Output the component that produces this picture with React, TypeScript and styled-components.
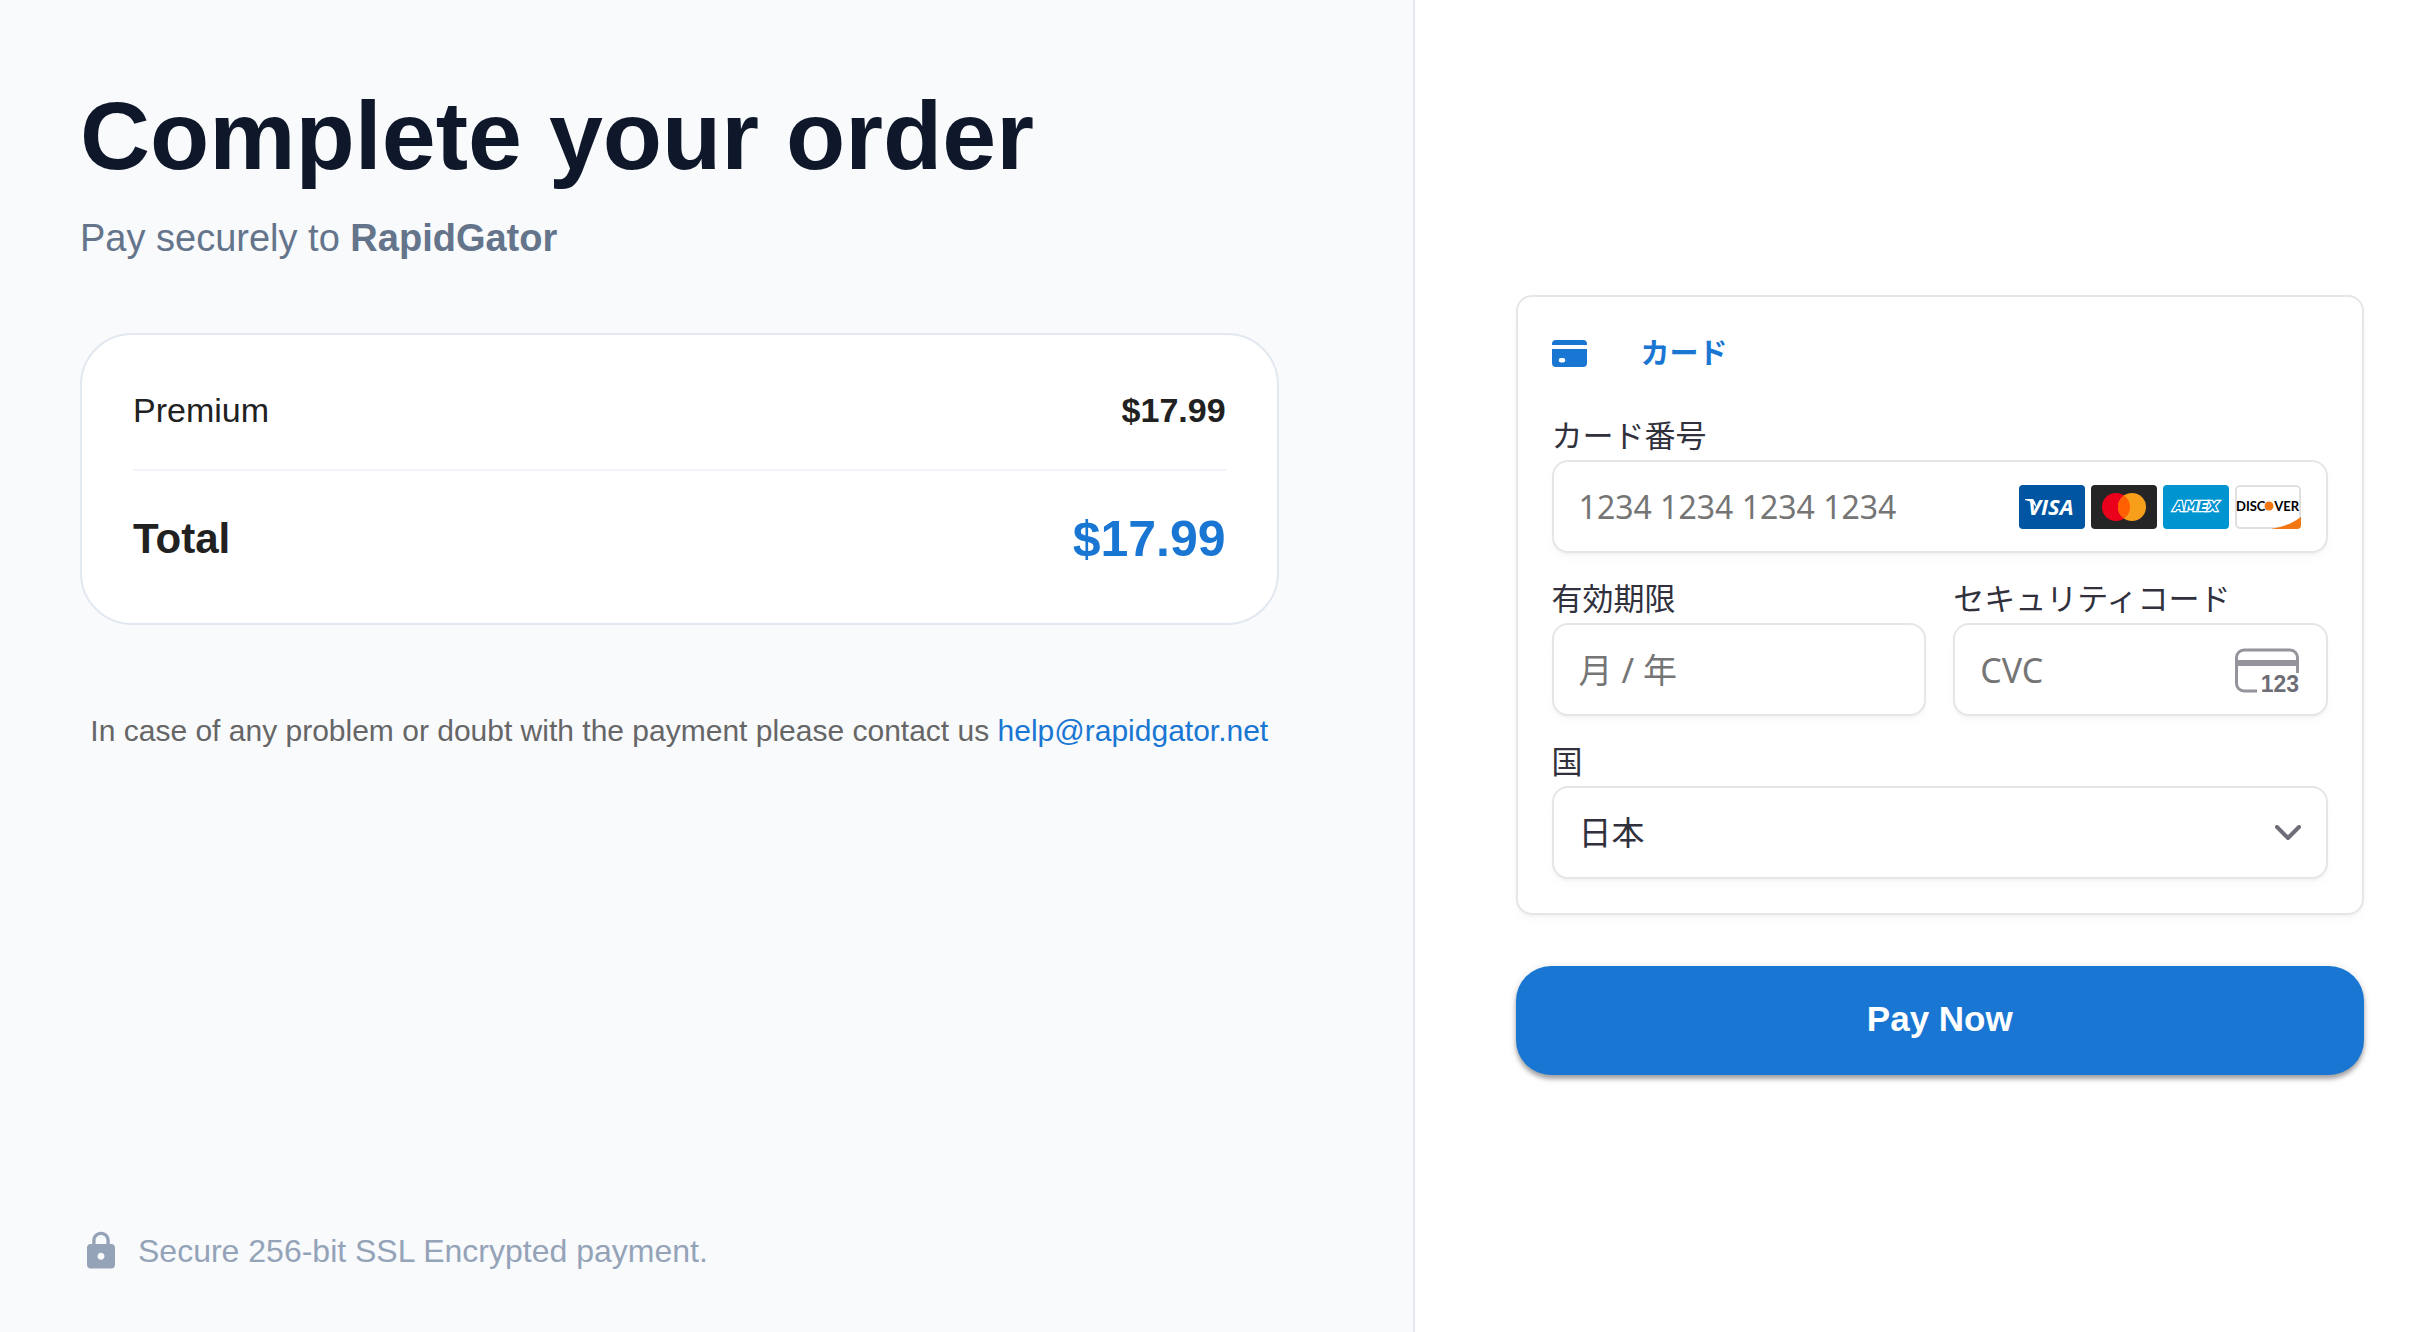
import React from "react";
import styled, { createGlobalStyle } from "styled-components";

const latin = `"Liberation Sans", Arial, Helvetica, sans-serif`;
const formFont = `"Noto Sans", "Noto Sans CJK JP", sans-serif`;
const blue = "#1976d2";

const GlobalStyle = createGlobalStyle`
  *, *::before, *::after { box-sizing: border-box; }
  body { margin: 0; background: #fff; font-family: ${latin}; }
`;

const Page = styled.div`
  display: grid;
  grid-template-columns: minmax(0, 7fr) minmax(0, 5fr);
  min-height: 100vh;
`;

const Summary = styled.section`
  display: flex;
  flex-direction: column;
  padding: 80px 134px 58px 80px;
  background: #f8fafc;
  border-right: 2px solid #e2e8f0;
`;

const Title = styled.h1`
  margin: 0 0 18px;
  font-size: 97px;
  line-height: 112px;
  font-weight: 700;
  color: #0f172a;
`;

const Subtitle = styled.p`
  margin: 0 0 67px;
  font-size: 38px;
  line-height: 56px;
  color: #64748b;
`;

const OrderCard = styled.div`
  padding: 51px;
  background: #fff;
  border: 2px solid #e2e8f0;
  border-radius: 52px;
  color: #212121;
`;

const OrderRow = styled.div<{ $total?: boolean }>`
  display: flex;
  align-items: center;
  justify-content: space-between;
  font-size: ${(p) => (p.$total ? 42 : 34)}px;
  line-height: ${(p) => (p.$total ? 66 : 48)}px;
  font-weight: ${(p) => (p.$total ? 700 : 400)};
`;

const Price = styled.span<{ $total?: boolean }>`
  font-weight: 700;
  font-size: ${(p) => (p.$total ? 50 : 34)}px;
  color: ${(p) => (p.$total ? blue : "inherit")};
`;

const Divider = styled.hr`
  height: 2px;
  margin: 35px 0;
  border: 0;
  background: #f1f5f9;
`;

const Help = styled.p`
  margin: 83px 0 0;
  text-align: center;
  font-size: 30px;
  line-height: 46px;
  color: #666;
`;

const HelpLink = styled.a`
  color: ${blue};
  text-decoration: none;
`;

const Secure = styled.footer`
  display: flex;
  align-items: center;
  gap: 16px;
  margin-top: auto;
  font-size: 32px;
  line-height: 46px;
  color: #94a3b8;
`;

const Payment = styled.form`
  display: flex;
  flex-direction: column;
  justify-content: center;
  gap: 51px;
  padding: 38px 61px 0 101px;
  font-family: ${formFont};
`;

const Panel = styled.div`
  display: flex;
  flex-direction: column;
  gap: 24px;
  padding: 34px;
  border: 2px solid #e6e6e6;
  border-radius: 16px;
  box-shadow: 0 2px 2px rgba(0, 0, 0, 0.03), 0 6px 12px rgba(0, 0, 0, 0.02);
`;

const Method = styled.h2`
  display: flex;
  align-items: center;
  gap: 54px;
  margin: 0 0 15px;
  font-size: 29px;
  line-height: 44px;
  font-weight: 700;
  color: ${blue};
`;

const Columns = styled.div`
  display: grid;
  grid-template-columns: minmax(0, 1fr) minmax(0, 1fr);
  gap: 27px;
`;

const Field = styled.div`
  display: flex;
  flex-direction: column;
  gap: 4px;
  min-width: 0;
`;

const Label = styled.label`
  font-size: 31px;
  line-height: 42px;
  color: #30313d;
`;

const Control = styled.div`
  position: relative;
  display: flex;
  align-items: center;
  gap: 6px;
  height: 93px;
  padding: 0 25px;
  background: #fff;
  border: 2px solid #e6e6e6;
  border-radius: 16px;
  box-shadow: 0 2px 2px rgba(0, 0, 0, 0.03), 0 6px 12px rgba(0, 0, 0, 0.02);
`;

const Input = styled.input<{ $long?: boolean }>`
  flex: 1;
  min-width: 0;
  padding: 0;
  border: 0;
  outline: 0;
  background: transparent;
  font: 400 ${(p) => (p.$long ? 32 : 34)}px/50px ${formFont};
  color: #30313d;
  &::placeholder {
    color: #757575;
    opacity: 1;
  }
`;

const Select = styled.select`
  flex: 1;
  padding: 0;
  border: 0;
  outline: 0;
  appearance: none;
  background: transparent;
  font: 400 33px/50px ${formFont};
  color: #30313d;
`;

const PayButton = styled.button`
  height: 109px;
  padding: 0 24px 3px;
  border: 0;
  border-radius: 35px;
  background: ${blue};
  color: #fff;
  font: 700 35px/60px ${latin};
  box-shadow: 0 4px 4px rgba(0, 0, 0, 0.3), 0 2px 10px rgba(0, 0, 0, 0.12);
  cursor: pointer;
`;

const LockIcon = () => (
  <svg width="42" height="42" viewBox="0 0 24 24" fill="currentColor" aria-hidden="true">
    <path d="M18 8h-1V6c0-2.760-2.240-5-5-5S7 3.240 7 6v2H6c-1.100 0-2 .9-2 2v10c0 1.100.9 2 2 2h12c1.100 0 2-.9 2-2V10c0-1.100-.9-2-2-2zm-6 9c-1.100 0-2-.9-2-2s.9-2 2-2 2 .9 2 2-.9 2-2 2zm3.100-9H8.900V6c0-1.710 1.390-3.100 3.100-3.100s3.100 1.390 3.100 3.100v2z" />
  </svg>
);

const CardIcon = () => (
  <svg width="35" height="27" viewBox="0 0 35 27" aria-hidden="true">
    <path fill="currentColor" d="M0 5V4a4 4 0 0 1 4-4h27a4 4 0 0 1 4 4v1z" />
    <path
      fill="currentColor"
      fillRule="evenodd"
      d="M0 9h35v14a4 4 0 0 1-4 4H4a4 4 0 0 1-4-4zM9 18a2.300 2.300 0 0 0 0 4.600h2a2.300 2.300 0 0 0 0-4.600z"
    />
  </svg>
);

const VisaLogo = () => (
  <svg width="66" height="44" viewBox="0 0 66 44" role="img" aria-label="Visa">
    <rect width="66" height="44" rx="4" fill="#0055a2" />
    <path d="M6 14h8l2 3 2 7c-2-5-6-8-12-9z" fill="#fff" />
    <text x="9" y="30" fontFamily="Open Sans" fontWeight="700" fontStyle="italic" fontSize="22" fill="#fff">
      VISA
    </text>
  </svg>
);

const MastercardLogo = () => (
  <svg width="66" height="44" viewBox="0 0 66 44" role="img" aria-label="Mastercard">
    <rect width="66" height="44" rx="4" fill="#252525" />
    <circle cx="25" cy="22" r="14" fill="#eb001b" />
    <circle cx="41" cy="22" r="14" fill="#f79e1b" />
    <path d="M33 10.500a14 14 0 0 1 0 23 14 14 0 0 1 0-23z" fill="#ff5f00" />
  </svg>
);

const AmexLogo = () => (
  <svg width="66" height="44" viewBox="0 0 66 44" role="img" aria-label="American Express">
    <rect width="66" height="44" rx="4" fill="#0095d1" />
    <text
      x="33"
      y="26"
      textAnchor="middle"
      fontFamily="DejaVu Sans"
      fontWeight="700"
      fontStyle="italic"
      fontSize="14"
      fill="#0095d1"
      stroke="#fff"
      strokeWidth="2.500"
      strokeLinejoin="miter"
      paintOrder="stroke"
    >
      AMEX
    </text>
  </svg>
);

const DiscoverLogo = () => (
  <svg width="66" height="44" viewBox="0 0 66 44" role="img" aria-label="Discover">
    <rect x="1" y="1" width="64" height="42" rx="4" fill="#fff" stroke="#e0e0e0" strokeWidth="2" />
    <path d="M36 44C48 42 58 38 66 32v8a4 4 0 0 1-4 4z" fill="#f27712" />
    <g fontFamily="Lato" fontWeight="700" fontSize="13" fill="#000">
      <text x="1" y="26">DISC</text>
      <text x="64" y="26" textAnchor="end">VER</text>
    </g>
    <circle cx="34" cy="21" r="4.500" fill="#f27712" />
  </svg>
);

const CvcIcon = () => (
  <svg width="66" height="56" viewBox="0 0 66 56" fill="none" aria-hidden="true">
    <path d="M22 49H9a7.500 7.500 0 0 1-7.500-7.500V15.500A7.500 7.500 0 0 1 9 8h46a7.500 7.500 0 0 1 7.500 7.500V31" stroke="#93949c" strokeWidth="3" />
    <path d="M1.500 18h61v6h-61z" fill="#93949c" />
    <text x="64" y="50" textAnchor="end" fontFamily="Liberation Sans" fontWeight="700" fontSize="23" fill="#6d6e78">
      123
    </text>
  </svg>
);

const Chevron = styled.svg`
  position: absolute;
  right: 25px;
  pointer-events: none;
`;

export default function App() {
  return (
    <>
      <GlobalStyle />
      <Page>
        <Summary>
          <Title>Complete your order</Title>
          <Subtitle>
            Pay securely to <strong>RapidGator</strong>
          </Subtitle>
          <OrderCard>
            <OrderRow>
              <span>Premium</span>
              <Price>$17.99</Price>
            </OrderRow>
            <Divider />
            <OrderRow $total>
              <span>Total</span>
              <Price $total>$17.99</Price>
            </OrderRow>
          </OrderCard>
          <Help>
            In case of any problem or doubt with the payment please contact us{" "}
            <HelpLink href="mailto:help@rapidgator.net">help@rapidgator.net</HelpLink>
          </Help>
          <Secure>
            <LockIcon />
            <span>Secure 256-bit SSL Encrypted payment.</span>
          </Secure>
        </Summary>
        <Payment lang="ja" onSubmit={(e) => e.preventDefault()}>
          <Panel>
            <Method>
              <CardIcon />
              <span>カード</span>
            </Method>
            <Field>
              <Label htmlFor="number">カード番号</Label>
              <Control>
                <Input $long id="number" inputMode="numeric" autoComplete="cc-number" placeholder="1234 1234 1234 1234" />
                <VisaLogo />
                <MastercardLogo />
                <AmexLogo />
                <DiscoverLogo />
              </Control>
            </Field>
            <Columns>
              <Field>
                <Label htmlFor="expiry">有効期限</Label>
                <Control>
                  <Input id="expiry" inputMode="numeric" autoComplete="cc-exp" placeholder="月 / 年" />
                </Control>
              </Field>
              <Field>
                <Label htmlFor="cvc">セキュリティコード</Label>
                <Control>
                  <Input id="cvc" inputMode="numeric" autoComplete="cc-csc" placeholder="CVC" />
                  <CvcIcon />
                </Control>
              </Field>
            </Columns>
            <Field>
              <Label htmlFor="country">国</Label>
              <Control>
                <Select id="country" defaultValue="JP">
                  <option value="JP">日本</option>
                </Select>
                <Chevron width="26" height="16" viewBox="0 0 26 16" fill="none" aria-hidden="true">
                  <path d="M2 2l11 11L24 2" stroke="#6d6e78" strokeWidth="4" strokeLinecap="round" strokeLinejoin="round" />
                </Chevron>
              </Control>
            </Field>
          </Panel>
          <PayButton type="submit">Pay Now</PayButton>
        </Payment>
      </Page>
    </>
  );
}
